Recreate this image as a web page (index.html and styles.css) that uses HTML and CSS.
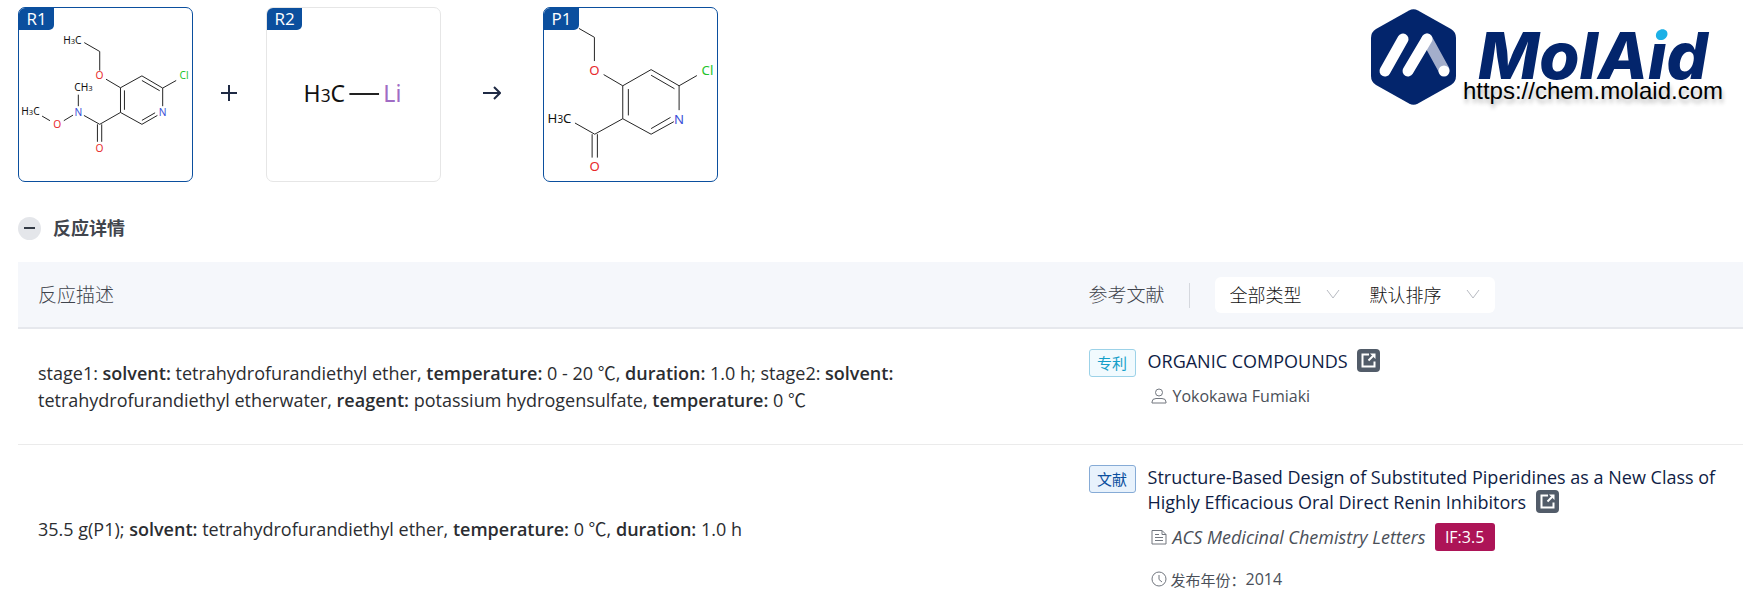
FILE: index.html
```html
<!DOCTYPE html>
<html lang="zh-CN">
<head>
<meta charset="UTF-8">
<meta name="viewport" content="width=device-width, initial-scale=1">
<title>MolAid</title>
<link rel="stylesheet" href="styles.css">
</head>
<body>

<header class="top">
    <div class="reaction">
        <div class="mol-card active">
            <span class="mol-label">R1</span>
            <svg class="mol mol-r1" viewBox="0 0 525 525">
                <path d="M198 105 L245 132 V190 M264 216 L308 242 L373 206 L436 243 V298 M420 326 L373 353 L308 317 V242 M320 250 V309 M373 220 L427 251 M373 341 L413 318 M436 243 L477 220 M308 317 L245 353 L197 326 M180 263 V298 M164 325 L136 342 M94 342 L70 328 M238 353 V406 M251 353 V406"/>
                <text x="134" y="108">H<tspan class="sub">3</tspan>C</text>
                <text x="168" y="253">CH<tspan class="sub">3</tspan></text>
                <text x="7" y="326">H<tspan class="sub">3</tspan>C</text>
                <text class="o mid" x="244" y="217">O</text>
                <text class="o mid" x="116" y="364">O</text>
                <text class="o mid" x="244" y="437">O</text>
                <text class="n mid" x="180" y="328">N</text>
                <text class="n mid" x="436" y="328">N</text>
                <text class="cl mid" x="501" y="217">Cl</text>
            </svg>
        </div>
        <svg class="plus" viewBox="0 0 18 18"><path d="M1 9 H17 M9 1 V17"/></svg>
        <div class="mol-card">
            <span class="mol-label">R2</span>
            <svg class="mol mol-r2" viewBox="0 0 525 525">
                <path d="M250 261 H340"/>
                <text x="111" y="286">H<tspan class="sub">3</tspan>C</text>
                <text class="li" x="353" y="286">Li</text>
            </svg>
        </div>
        <svg class="arrow" viewBox="0 0 18 14"><path d="M0 7 H17 M11 1 L17 7 L11 13"/></svg>
        <div class="mol-card active">
            <span class="mol-label">P1</span>
            <svg class="mol mol-p1" viewBox="0 0 525 525">
                <path d="M106 62 L153 89 V161 M181 202 L239 236 L325 187 L410 236 V310 M394 345 L325 383 L239 336 V236 M256 246 V326 M325 204 L396 245 M325 366 L384 332 M410 236 L464 205 M239 336 L154 383 L94 349 M146 383 V454 M162 383 V454"/>
                <text x="11" y="348">H<tspan class="sub">3</tspan>C</text>
                <text class="o mid" x="153" y="202">O</text>
                <text class="o mid" x="154" y="494">O</text>
                <text class="n mid" x="410" y="351">N</text>
                <text class="cl mid" x="496" y="202">Cl</text>
            </svg>
        </div>
    </div>

    <div class="brand">
        <svg class="logo" viewBox="0 0 345 98">
            <defs>
                <!-- cyan dot over a navy stem -->
                <linearGradient id="dot" gradientUnits="userSpaceOnUse" x1="0" y1="0" x2="0" y2="98">
                    <stop offset="0.335" stop-color="#1cb0e6"/>
                    <stop offset="0.335" stop-color="#03256c"/>
                </linearGradient>
            </defs>
            <path class="navy" d="M38 1.500 Q42.500 -1 47 1.500 L80 20 Q85 23 85 29 V67 Q85 73 80 76 L47 94.500 Q42.500 97 38 94.500 L5 76 Q0 73 0 67 V29 Q0 23 5 20 Z"/>
            <path class="bar faded" d="M56 30 L73 61"/>
            <path class="bar" d="M14 62 L32 30 M37 62 L56 30"/>
            <circle cx="73" cy="62" r="5.500" fill="#fff"/>
            <text class="logo-text" x="107" y="70">MolA<tspan fill="url(#dot)">i</tspan>d</text>
        </svg>
        <a class="site" href="#">https://chem.molaid.com</a>
    </div>
</header>

<section class="details">
    <div class="details-head">
        <button class="toggle" type="button" aria-label="收起"></button>
        <h2>反应详情</h2>
    </div>

    <table class="ref-table">
        <thead>
            <tr>
                <th class="col-desc">反应描述</th>
                <th class="col-ref">
                    <div class="ref-head">
                        <span>参考文献</span>
                        <div class="filters">
                            <select aria-label="类型">
                                <option>全部类型</option>
                            </select>
                            <select aria-label="排序">
                                <option>默认排序</option>
                            </select>
                        </div>
                    </div>
                </th>
            </tr>
        </thead>
        <tbody>
            <tr>
                <td class="desc">stage1: <b>solvent:</b> tetrahydrofurandiethyl ether, <b>temperature:</b> 0 - 20 ℃, <b>duration:</b> 1.0 h; stage2: <b>solvent:</b> tetrahydrofurandiethyl etherwater, <b>reagent:</b> potassium hydrogensulfate, <b>temperature:</b> 0 ℃</td>
                <td class="ref">
                    <div class="ref-item">
                        <span class="tag patent">专利</span>
                        <div class="ref-body">
                            <div class="ref-title">ORGANIC COMPOUNDS
                                <button class="open" type="button" aria-label="打开"><svg viewBox="0 0 23 23"><path d="M12 5.500 H5.500 V17.500 H17.500 V12.500"/><path class="tip" d="M11.500 11.500 L16 7"/><path class="head" d="M13 4.500 H18.500 V10 Z"/></svg></button>
                            </div>
                            <div class="meta spaced">
                                <svg class="icon" viewBox="0 0 16 16"><circle cx="8" cy="4.500" r="3.500"/><path d="M1 15 V14 Q1 10.500 5 10.500 H11 Q15 10.500 15 14 V15 Z"/></svg>
                                <span>Yokokawa Fumiaki</span>
                            </div>
                        </div>
                    </div>
                </td>
            </tr>
            <tr>
                <td class="desc">35.5 g(P1); <b>solvent:</b> tetrahydrofurandiethyl ether, <b>temperature:</b> 0 ℃, <b>duration:</b> 1.0 h</td>
                <td class="ref">
                    <div class="ref-item">
                        <span class="tag paper">文献</span>
                        <div class="ref-body">
                            <div class="ref-title">Structure-Based Design of Substituted Piperidines as a New Class of Highly Efficacious Oral Direct Renin Inhibitors
                                <button class="open" type="button" aria-label="打开"><svg viewBox="0 0 23 23"><path d="M12 5.500 H5.500 V17.500 H17.500 V12.500"/><path class="tip" d="M11.500 11.500 L16 7"/><path class="head" d="M13 4.500 H18.500 V10 Z"/></svg></button>
                            </div>
                            <div class="meta spaced">
                                <svg class="icon" viewBox="0 0 16 16"><path d="M1 1.500 H11 L15 5.500 V15 H1 Z M11 1.500 V5.500 H15 M4 5.500 H8 M4 8.500 H12 M4 11.500 H12"/></svg>
                                <i class="journal">ACS Medicinal Chemistry Letters</i>
                                <span class="impact">IF:3.5</span>
                            </div>
                            <div class="meta year">
                                <svg class="icon" viewBox="0 0 16 16"><circle cx="8" cy="8" r="7"/><path d="M8 4 V8.500 L11 11"/></svg>
                                <span class="year-label">发布年份：</span>
                                <span>2014</span>
                            </div>
                        </div>
                    </div>
                </td>
            </tr>
        </tbody>
    </table>
</section>

</body>
</html>
```
FILE: styles.css
```css
* {
    box-sizing: border-box;
}
body {
    margin: 0;
    padding: 7px 2px 0 18px;
    height: 100vh;
    overflow: hidden;
    background: #fff;
    color: #2b2d31;
    font-family: "Open Sans", "Noto Sans CJK SC", sans-serif;
    font-size: 18px;
}

/* reaction scheme */
.top {
    display: flex;
    justify-content: space-between;
    align-items: flex-start;
}
.reaction {
    display: flex;
    align-items: center;
}
.mol-card {
    position: relative;
    width: 175px;
    height: 175px;
    border: 1px solid #e6e6e6;
    border-radius: 7px;
    overflow: hidden;
}
.mol-card.active {
    border-color: #0b4f9e;
}
.mol-label {
    position: absolute;
    top: 0;
    left: 0;
    width: 35px;
    height: 22px;
    line-height: 21px;
    text-align: center;
    font-size: 17px;
    color: #fff;
    background: #0b4f9e;
    border-bottom-right-radius: 5px;
}
.mol {
    display: block;
    width: 100%;
    height: 100%;
    fill: #111;
    font-family: "Noto Sans", sans-serif;
}
.mol path {
    fill: none;
    stroke: #222;
    stroke-width: 3;
}
.mol .mid {
    text-anchor: middle;
}
.mol .sub {
    font-size: 75%;
}
.mol-r1 {
    font-size: 31px;
}
.mol-r2 {
    font-size: 70px;
}
.mol-r2 path {
    stroke-width: 6;
}
.mol-p1 {
    font-size: 40px;
}
.mol .o {
    fill: #e8292b;
}
.mol .n {
    fill: #3a4fd8;
}
.mol .cl {
    fill: #22c32a;
}
.mol .li {
    fill: #a06cc4;
}
.plus,
.arrow {
    fill: none;
    stroke: #1f2a44;
    stroke-width: 2;
}
.plus {
    width: 18px;
    height: 18px;
    margin: 0 28px 4px 27px;
}
.arrow {
    width: 18px;
    height: 14px;
    margin: 0 42px 4px;
}

/* logo */
.brand {
    position: relative;
    width: 372px;
    padding-top: 2px;
}
.logo {
    display: block;
    width: 345px;
    height: 98px;
}
.navy {
    fill: #03256c;
}
.bar {
    fill: none;
    stroke: #fff;
    stroke-width: 11;
    stroke-linecap: round;
}
.bar.faded {
    stroke: #a3aecb;
}
.logo-text {
    font-family: Inter, sans-serif;
    font-size: 65px;
    font-weight: 800;
    font-style: italic;
    fill: #03256c;
}
.site {
    position: absolute;
    right: 20px;
    bottom: 2px;
    font-family: "Liberation Sans", Arial, sans-serif;
    font-size: 24px;
    line-height: 28px;
    color: #000;
    text-decoration: none;
    text-shadow: 1px 4px 4px rgba(0, 0, 0, 0.3);
}

/* details */
.details-head {
    display: flex;
    align-items: center;
    gap: 12px;
    height: 24px;
    margin: 34px 0 22px;
}
.details-head h2 {
    margin: 0;
    font-size: 18px;
    line-height: 24px;
    color: #41454d;
}
.toggle {
    display: flex;
    align-items: center;
    justify-content: center;
    width: 23px;
    height: 23px;
    padding: 0;
    border: none;
    border-radius: 50%;
    background: #e4e6ea;
    cursor: pointer;
}
.toggle::before {
    content: "";
    width: 11px;
    height: 2px;
    background: #333a45;
}
.ref-table {
    width: 100%;
    table-layout: fixed;
    border-collapse: separate;
    border-spacing: 0;
}
th {
    height: 67px;
    padding: 0 20px;
    text-align: left;
    font-size: 19px;
    line-height: 24px;
    font-weight: 300;
    color: #3f444d;
    background: #f5f7fb;
    border-bottom: 2px solid #e6e8ed;
}
.col-desc {
    width: 60.9%;
}
td {
    padding: 20px;
    border-bottom: 1px solid #ebebeb;
}
.desc {
    line-height: 27px;
}
.desc b {
    font-weight: 600;
}
.ref {
    vertical-align: top;
}
.ref-head {
    display: flex;
    align-items: center;
}
.filters {
    display: flex;
    position: relative;
    margin-left: 50px;
    background: #fff;
    border-radius: 6px;
}
.filters::before {
    content: "";
    position: absolute;
    left: -26px;
    top: 6px;
    width: 1px;
    height: 25px;
    background: #d5d8de;
}
.filters select {
    appearance: none;
    width: 140px;
    height: 36px;
    padding: 0 15px;
    border: none;
    font-family: inherit;
    font-size: 18px;
    font-weight: 300;
    color: #111;
    background: transparent url("data:image/svg+xml,%3Csvg xmlns='http://www.w3.org/2000/svg' width='14' height='11' fill='none' stroke='%23b8bbc2'%3E%3Cpath d='M1 1 L7 9 L13 1'/%3E%3C/svg%3E") no-repeat right 15px center;
}
.ref-item {
    display: flex;
    align-items: flex-start;
    gap: 12px;
}
.ref-body {
    flex: 1;
}
.tag {
    flex: none;
    width: 47px;
    height: 28px;
    line-height: 26px;
    text-align: center;
    font-size: 15px;
    border: 1px solid;
    border-radius: 3px;
}
.patent {
    color: #149fc9;
    background: #f1fafe;
    border-color: #9cd2e8;
}
.paper {
    color: #0b4f9e;
    background: #e8f2fc;
    border-color: #86abd6;
}
.ref-title {
    line-height: 25px;
    color: #0f1d45;
}
.open {
    width: 23px;
    height: 23px;
    margin-left: 5px;
    padding: 0;
    border: none;
    border-radius: 4px;
    background: #525c69;
    vertical-align: top;
    cursor: pointer;
}
.open svg {
    display: block;
    fill: none;
    stroke: #fff;
    stroke-width: 2;
}
.open .head {
    fill: #fff;
    stroke: none;
}
.meta {
    display: flex;
    align-items: center;
    height: 28px;
    margin-left: 3px;
    font-size: 16px;
    color: #4a4f58;
}
.meta.spaced {
    margin: 8px 0 14px 3px;
}
.icon {
    width: 16px;
    height: 16px;
    margin-right: 6px;
    fill: none;
    stroke: #72777f;
}
.journal {
    font-size: 18px;
}
.impact {
    width: 60px;
    height: 28px;
    margin-left: 9px;
    line-height: 28px;
    text-align: center;
    color: #fff;
    background: #ad1457;
    border-radius: 3px;
}
.year .icon {
    margin-right: 4px;
}
.year-label {
    font-size: 15px;
}
```
